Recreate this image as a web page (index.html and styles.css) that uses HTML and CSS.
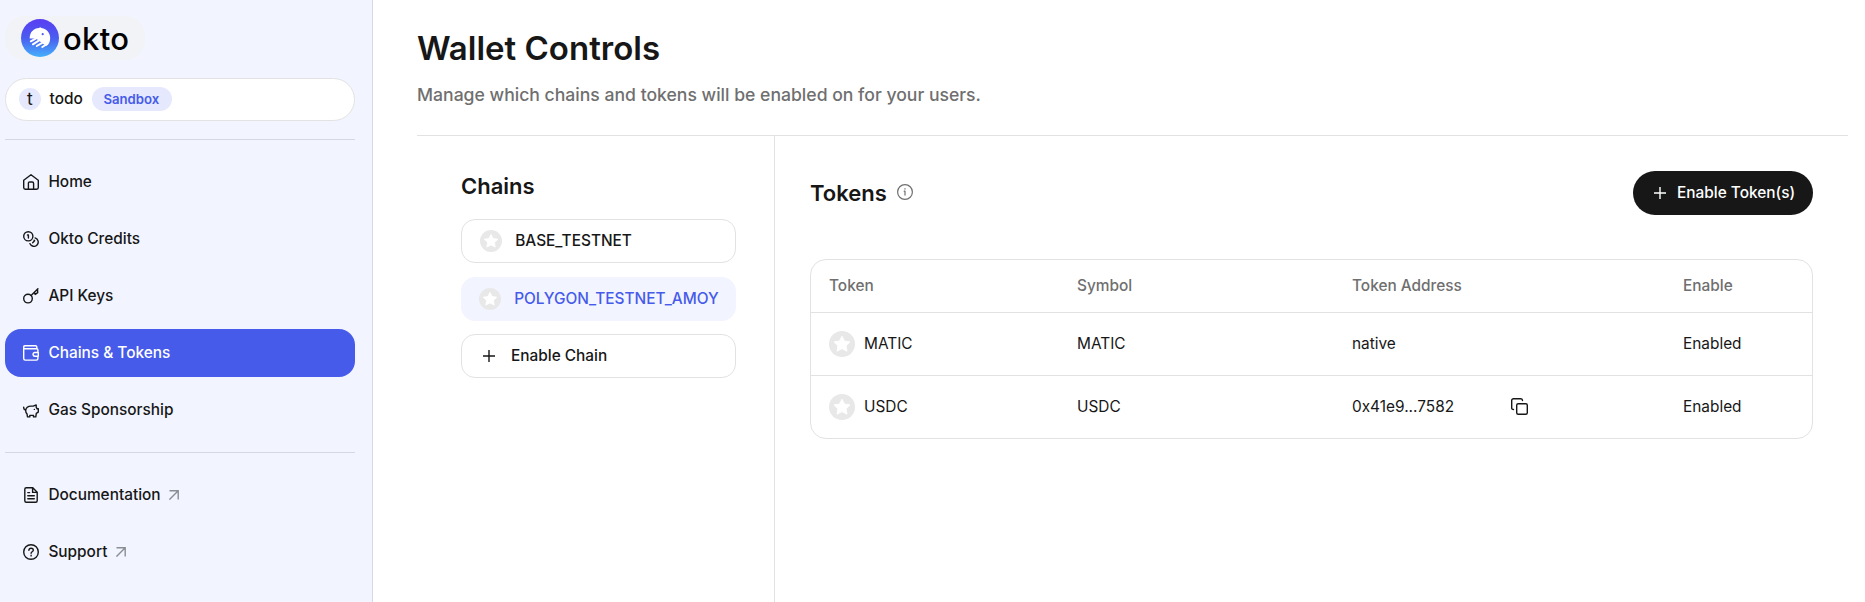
FILE: index.html
```html
<!DOCTYPE html>
<html lang="en">
<head>
<meta charset="utf-8">
<title>Wallet Controls</title>
<link rel="stylesheet" href="styles.css">
</head>
<body>
<svg class="defs" width="0" height="0" aria-hidden="true">
  <defs>
    <linearGradient id="brand" x1="0" y1="0" x2="0" y2="1">
      <stop offset="0" stop-color="#5a3df2"/><stop offset=".5" stop-color="#4a5df0"/><stop offset="1" stop-color="#45b0fb"/>
    </linearGradient>
    <symbol id="star" viewBox="0 0 26 26">
      <circle cx="13" cy="13" r="13" fill="#e8e8e8"/>
      <path d="M13 5.200l2.500 4.900 5.500.8-4 3.800 1 5.500-5-2.600-5 2.600 1-5.500-4-3.800 5.500-.8z" fill="#fff" stroke="#fff" stroke-width="1" stroke-linejoin="round"/>
    </symbol>
    <symbol id="plus" viewBox="0 0 12 12"><path d="M6 0v12M0 6h12" stroke="currentColor" stroke-width="1.4" fill="none"/></symbol>
    <symbol id="out" viewBox="0 0 10 10"><path d="M.5.8h8.700v8.700M9.200.8L.4 9.600" stroke="currentColor" stroke-width="1.400" fill="none"/></symbol>
  </defs>
</svg>
<div class="app">
  <aside class="sidebar">
    <div class="logo">
      <svg class="logo-mark" viewBox="0 0 38 38">
        <circle cx="19" cy="19" r="19" fill="url(#brand)"/>
        <path d="M8.700 19.500C8.500 13 13 9.200 18 9L19.200 8.200L20.500 9C26 10 29.200 14 29.200 19C29.200 23 27.500 26 25 27L19 22.500L15 19.500Z" fill="#fff"/>
        <path d="M9.800 22.300L16 18.800M11.900 25.300L18.500 21.200M15.800 27L22 23.300M21.300 28L26 25" fill="none" stroke="#fff" stroke-width="2" stroke-linecap="round"/>
        <circle cx="21.700" cy="15.200" r="1.100" fill="#4a5df0"/>
      </svg>
      <span class="logo-text">okto</span>
    </div>
    <div class="account">
      <span class="avatar">t</span><span class="account-name">todo</span><span class="badge">Sandbox</span>
    </div>
    <nav class="nav">
      <a class="item"><svg class="icon" viewBox="0 0 16 16"><path d="M.7 6.200L8 .8l7.300 5.400v7.300c0 1-.6 1.700-1.600 1.700H2.300c-1 0-1.600-.7-1.600-1.700zM5.400 15V9.400c0-.9.500-1.400 1.400-1.400h2.400c.9 0 1.400.5 1.400 1.400V15"/></svg>Home</a>
      <a class="item"><svg class="icon" viewBox="0 0 16 16"><circle cx="5.300" cy="5.300" r="4.600"/><path d="M4.500 4h.9v3M12.100 6.900a4.300 4.300 0 1 1-5.200 5.700M11.100 9.300l.5.500-1.900 1.900"/></svg>Okto Credits</a>
      <a class="item"><svg class="icon" viewBox="0 0 16 16"><circle cx="5" cy="10.600" r="4.300"/><path d="M8.100 7.500L14.900.8M11.300 4.300l.9 2.100 2.500-1.700-.2-3.400"/></svg>API Keys</a>
      <a class="item active"><svg class="icon" viewBox="0 0 16 16"><path d="M13.800 3.800V1.900c0-.6-.5-1.100-1.100-1.100H2.100a1.500 1.500 0 0 0 0 3h11.500c.8 0 1.300.5 1.300 1.300v2.400M.7 2.300v11.300c0 .9.600 1.500 1.500 1.500h11.200c.9 0 1.500-.6 1.500-1.500v-2.400M15.300 7.500h-3.400a1.850 1.850 0 0 0 0 3.700h3.400z"/></svg>Chains &amp; Tokens</a>
      <a class="item"><svg class="icon" viewBox="0 0 16 16"><path d="M2.700 8.400C3.100 5.300 5.400 4.100 8 4.100h2.200L13.200 2.900v2.300l.9 1.600h1.200v3.300l-2 1.300-.5 3.500h-2.300v-1.500H6.800v1.500H4.500L4 11.900C3 11.100 2.600 9.900 2.700 8.400zM2.700 8C1.200 7.900.6 6.900.7 5.200M11.300 7.400h.1"/></svg>Gas Sponsorship</a>
    </nav>
    <div class="nav nav-secondary">
      <a class="item"><svg class="icon" viewBox="0 0 16 16"><path d="M9.800.8H3.300c-.9 0-1.500.6-1.500 1.500v11.400c0 .9.600 1.500 1.500 1.500h9.400c.9 0 1.500-.6 1.500-1.500V5.200zM9.600.8v4.600h4.600M4.800 5.600h1.800M4.800 8.700h6.500M4.800 11.800h6.500"/></svg>Documentation<svg class="out"><use href="#out"/></svg></a>
      <a class="item"><svg class="icon" viewBox="0 0 16 16"><circle cx="8" cy="8" r="7.300"/><path d="M5.900 6.200C6 5 6.800 4.300 8.100 4.300c1.300 0 2.200.8 2.200 1.900 0 1.500-2.200 1.700-2.200 3.100M8.100 11.200v.7"/></svg>Support<svg class="out"><use href="#out"/></svg></a>
    </div>
  </aside>
  <main class="main">
    <header class="header">
      <h1 class="title">Wallet Controls</h1>
      <p class="subtitle">Manage which chains and tokens will be enabled on for your users.</p>
    </header>
    <div class="content">
      <section class="chains">
        <h2 class="heading">Chains</h2>
        <div class="chain"><svg class="star"><use href="#star"/></svg>BASE_TESTNET</div>
        <div class="chain selected"><svg class="star"><use href="#star"/></svg>POLYGON_TESTNET_AMOY</div>
        <div class="chain add"><svg class="plus"><use href="#plus"/></svg>Enable Chain</div>
      </section>
      <section class="tokens">
        <div class="tokens-head">
          <h2 class="heading">Tokens</h2>
          <svg class="info" viewBox="0 0 16 16"><circle cx="8" cy="8" r="7.400"/><path d="M7.200 7.200H8v3.900M8 4.700v.4"/></svg>
          <button class="enable"><svg class="plus"><use href="#plus"/></svg>Enable Token(s)</button>
        </div>
        <div class="table">
          <div class="row head"><span>Token</span><span>Symbol</span><span>Token Address</span><span>Enable</span></div>
          <div class="row"><span class="token"><svg class="star big"><use href="#star"/></svg>MATIC</span><span>MATIC</span><span>native</span><span>Enabled</span></div>
          <div class="row"><span class="token"><svg class="star big"><use href="#star"/></svg>USDC</span><span>USDC</span><span class="address">0x41e9...7582<svg class="copy" viewBox="0 0 17 17"><rect x="5.700" y="5.700" width="10.600" height="10.600" rx="1.500"/><path d="M2.500 11.500c-1.200 0-1.800-.6-1.800-1.600V2.500C.7 1.400 1.400.7 2.500.7h7.400c1 0 1.600.6 1.600 1.800"/></svg></span><span>Enabled</span></div>
        </div>
      </section>
    </div>
  </main>
</div>
</body>
</html>
```
FILE: styles.css
```css
* { box-sizing: border-box; }
body { margin: 0; background: #fff; color: #171717; font: 500 15.4px/24px Inter, sans-serif; }
h1, h2, p { margin: 0; }
svg { display: block; flex: none; }
.defs { position: absolute; }
.app { display: flex; height: 602px; overflow: hidden; }

.sidebar { width: 373px; flex: none; background: #f2f5ff; border-right: 1px solid #d4d8e2; padding: 16px 17px 0 5px; }
.logo { display: flex; align-items: center; width: 140px; height: 44px; padding-left: 16px; border-radius: 20px; background: #f2f3f6; }
.logo-mark { width: 38px; height: 38px; }
.logo-text { margin-left: 4px; padding-top: 1px; font: 500 31px/38px Inter, sans-serif; letter-spacing: .3px; color: #000; }
.account { display: flex; align-items: center; height: 43px; margin-top: 18px; padding: 0 0 1px 13px; border: 1px solid #e2e2e2; border-radius: 22px; background: #fff; }
.avatar { display: flex; align-items: center; justify-content: center; width: 22px; height: 22px; border-radius: 50%; background: #e6e9fd; font-size: 17.6px; font-weight: 400; }
.account-name { margin-left: 8.6px; }
.badge { margin-left: 9px; padding-right: 1px; width: 80px; text-align: center; border-radius: 12px; background: #e6e9fd; color: #465bea; font-size: 13.2px; font-weight: 600; letter-spacing: -.05px; }
.nav { display: flex; flex-direction: column; gap: 9px; margin-top: 18px; padding-top: 18px; border-top: 1px solid #d4d8e2; }
.nav-secondary { margin-top: 18px; }
.item { display: flex; align-items: center; height: 48px; padding-left: 18px; border-radius: 16px; }
.icon, .info, .copy { width: 16px; height: 16px; fill: none; stroke: currentColor; stroke-width: 1.4; stroke-linecap: round; stroke-linejoin: round; }
.icon { margin-right: 9.4px; }
.active { background: #465bea; color: #fff; }
.out { width: 10px; height: 10px; margin-left: 8.4px; color: #8b8d95; }

.main { flex: 1; display: flex; flex-direction: column; padding: 0 17px 0 44px; }
.header { height: 136px; flex: none; padding-top: 28px; border-bottom: 1px solid #e2e2e2; }
.title { font-size: 33px; line-height: 40px; font-weight: 600; }
.subtitle { margin-top: 14px; font-size: 17.6px; line-height: 26px; color: #6f6f6f; }
.content { flex: 1; display: flex; }
.chains { width: 358px; flex: none; padding: 35px 38px 0 44px; border-right: 1px solid #e2e2e2; }
.heading { font-size: 22px; line-height: 30px; font-weight: 600; }
.chain { display: flex; align-items: center; height: 44px; margin-top: 14px; padding-left: 18px; border: 1px solid #e2e2e2; border-radius: 14px; }
.heading + .chain { margin-top: 18px; }
.selected { padding-left: 17px; border-color: #f2f5ff; background: #f2f5ff; color: #465bea; }
.star { width: 22px; height: 22px; margin-right: 13.2px; }
.big { width: 26px; height: 26px; margin-right: 9px; }
.plus { width: 12px; height: 12px; }
.add { margin-top: 13px; padding-left: 21px; }
.add .plus { margin-right: 16px; }
.tokens { flex: 1; padding: 35px 35px 0 35px; }
.tokens-head { display: flex; align-items: center; height: 44px; }
.info { margin: 0 0 2px 10px; color: #6f6f6f; stroke-width: 1.2; }
.enable { display: flex; align-items: center; width: 180px; height: 44px; margin-left: auto; padding: 0 0 0 21px; border: 0; border-radius: 22px; background: #171717; color: #fff; font: inherit; }
.enable .plus { margin-right: 11px; }
.table { margin-top: 44px; border: 1px solid #e2e2e2; border-radius: 16px; font-weight: 400; }
.row { display: grid; grid-template-columns: 248px 275px 331px 1fr; align-items: center; height: 63px; padding-left: 18px; border-top: 1px solid #e2e2e2; }
.head { height: 52px; border-top: 0; font-weight: 500; color: #6f6f6f; }
.token, .address { display: flex; align-items: center; }
.copy { width: 17px; height: 17px; margin: 0 0 1px 57px; }
```
